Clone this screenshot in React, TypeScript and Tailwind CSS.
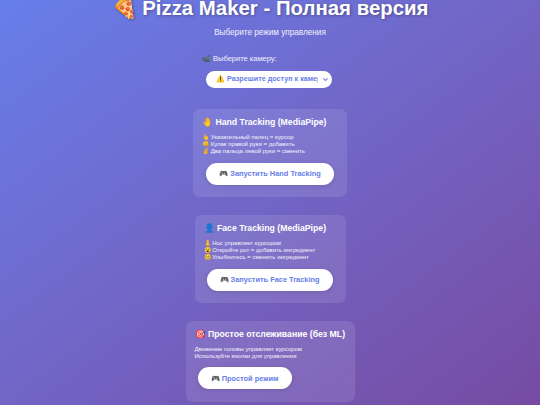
const Card = ({ title, icon, lines, button, className, buttonClass }: { title: string; icon: string; lines: string[]; button: string; className: string; buttonClass: string }) => {
  return (
    <div className={`rounded-[7px] bg-white/10 flex flex-col ${className}`}>
      <h3 className="text-[8.7px] leading-[12px] font-bold text-white whitespace-nowrap">
        {icon} {title}
      </h3>
      <div className="mt-[6px] text-[6px] leading-[7.2px] text-white/90 whitespace-nowrap">
        {lines.map((line) => (
          <p key={line}>{line}</p>
        ))}
      </div>
      <button className={`mt-[7px] h-[22px] self-start rounded-full bg-white text-center text-[7.4px] font-bold text-[#667eea] whitespace-nowrap shadow-[0_1px_4px_rgba(0,0,0,0.12)] ${buttonClass}`}>
        🎮 {button}
      </button>
    </div>
  );
};

const App = () => {
  return (
    <div className="h-[405px] w-[540px] overflow-hidden bg-gradient-to-br from-[#667eea] to-[#764ba2] text-white font-['Liberation_Sans',sans-serif]">
      <div className="flex flex-col items-center">
        {/* Header */}
        <h1 className="-mt-[4px] text-[20.4px] leading-[24px] font-bold whitespace-nowrap [text-shadow:1px_1px_3px_rgba(0,0,0,0.3)]">
          🍕 Pizza Maker - Полная версия
        </h1>
        <p className="mt-[7px] text-[8.2px] leading-[12px] text-white/90">Выберите режим управления</p>

        {/* Camera select */}
        <div className="mt-[15px] w-[136px]">
          <p className="text-[7.5px] leading-[10px] text-white/90 whitespace-nowrap">📹 Выберите камеру:</p>
        </div>
        <div className="mt-[7px] flex h-[17px] w-[126px] -translate-x-[1px] items-center justify-between rounded-full bg-white pl-[10px] pr-[3px] text-[7.2px] font-bold text-[#667eea]">
          <span className="w-[102px] overflow-hidden whitespace-nowrap">⚠️ Разрешите доступ к камере</span>
          <svg width="7" height="7" viewBox="0 0 10 10" fill="none" stroke="#667eea" strokeWidth="1.6"><path d="M2 3.5l3 3 3-3" /></svg>
        </div>

        {/* Modes */}
        <Card
          className="mt-[21px] h-[88px] w-[154px] pl-[9px] pt-[7px]"
          icon="🤚"
          title="Hand Tracking (MediaPipe)"
          lines={["👆 Указательный палец = курсор", "👊 Кулак правой руки = добавить", "✌️ Два пальца левой руки = сменить"]}
          buttonClass="ml-[4px] w-[128px]"
          button="Запустить Hand Tracking"
        />
        <Card
          className="mt-[18px] h-[88px] w-[151px] pl-[9px] pt-[7px]"
          icon="👤"
          title="Face Tracking (MediaPipe)"
          lines={["👃 Нос управляет курсором", "😮 Откройте рот = добавить ингредиент", "😊 Улыбнитесь = сменить ингредиент"]}
          buttonClass="ml-[3px] w-[126px]"
          button="Запустить Face Tracking"
        />
        <Card
          className="mt-[18px] h-[81px] w-[169px] pl-[9px] pt-[7px]"
          icon="🎯"
          title="Простое отслеживание (без ML)"
          lines={["Движение головы управляет курсором", "Используйте кнопки для управления"]}
          buttonClass="ml-[3px] w-[94px]"
          button="Простой режим"
        />
      </div>
    </div>
  );
};

export default App;
